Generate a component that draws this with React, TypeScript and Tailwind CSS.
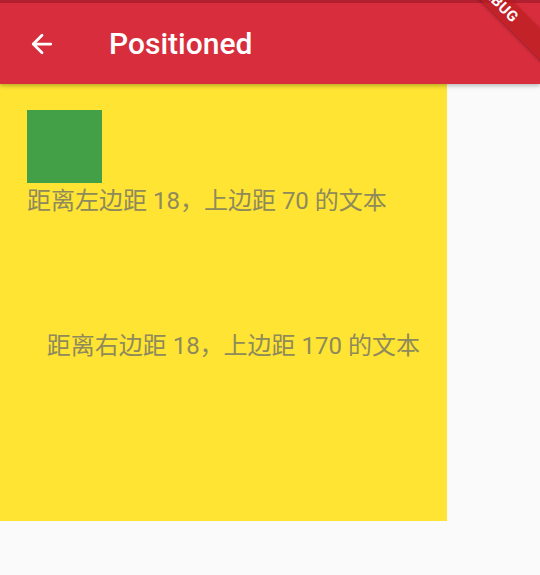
import { ArrowLeft } from 'lucide-react';

const font = { fontFamily: 'Roboto, "Noto Sans CJK SC", sans-serif' };

const DebugBanner = () => (
  <div className="pointer-events-none absolute right-0 top-0 z-20 h-[100px] w-[100px] overflow-hidden">
    <div className="absolute left-[-22px] top-[-9px] flex h-[22px] w-[160px] rotate-45 items-center justify-center bg-[#b71c1c]/[0.63] shadow-[0_1px_3px_rgba(0,0,0,0.3)]">
      <span className="text-[15px] font-bold leading-none tracking-[0.5px] text-white" style={font}>
        DEBUG
      </span>
    </div>
  </div>
);

const App = () => {
  return (
    <div className="relative h-[575px] w-[540px] overflow-hidden bg-[#fafafa]" style={font}>
      <header className="relative z-10 flex h-[84px] items-center border-t-[3px] border-[#b22030] bg-[#d72d3c] shadow-[0_2px_4px_rgba(0,0,0,0.25)]">
        <div className="flex w-[84px] items-center justify-center pr-[1px]">
          <ArrowLeft size={30} strokeWidth={2.2} className="text-white" />
        </div>
        <h1 className="ml-[25px] text-[30px] font-medium leading-none text-white">Positioned</h1>
      </header>
      <DebugBanner />

      <div className="relative flex h-[437px] w-[447px] flex-col items-start bg-[#ffe433] pl-[27px] pt-[26px]">
        <div className="h-[73px] w-[75px] bg-[#43a047]" />
        <p className="mt-[3px] text-[24px] leading-[30px] text-[#8e8a5b]">
          距离左边距 18，上边距 70 的文本
        </p>
        <p className="absolute right-[27px] top-[247px] text-[24px] leading-[30px] text-[#8e8a5b]">
          距离右边距 18，上边距 170 的文本
        </p>
      </div>
    </div>
  );
};

export default App;
